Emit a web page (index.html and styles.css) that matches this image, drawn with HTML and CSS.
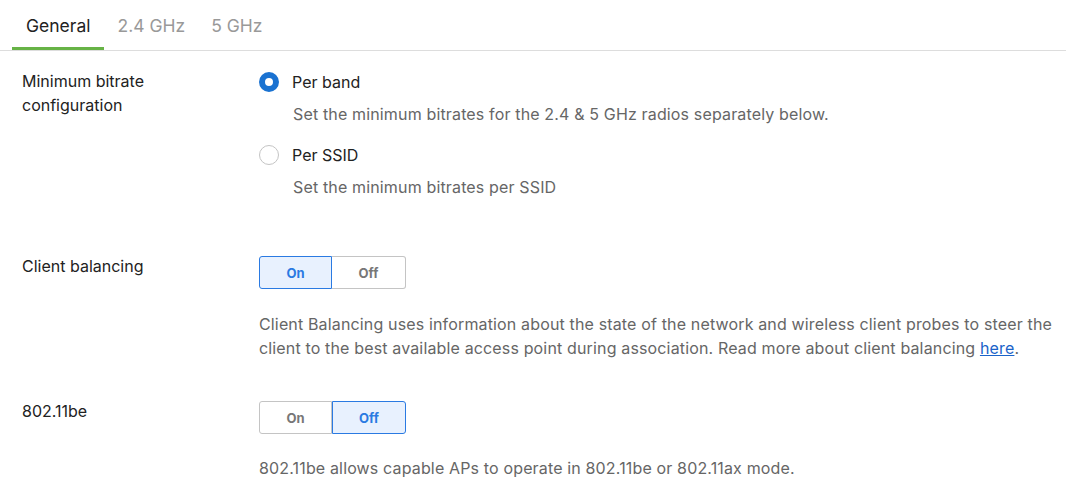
FILE: index.html
```html
<!DOCTYPE html>
<html lang="en">
<head>
    <meta charset="UTF-8">
    <title>Radio settings</title>
    <link rel="stylesheet" href="styles.css">
</head>
<body>
    <div class="tabs">
        <div class="tab active">General</div>
        <div class="tab">2.4 GHz</div>
        <div class="tab">5 GHz</div>
    </div>

    <div class="settings">
        <div class="row bitrate">
            <div class="label">Minimum bitrate<br>configuration</div>
            <div class="control">
                <label class="radio">
                    <span class="dot checked"></span>
                    <span>Per band</span>
                </label>
                <p class="hint indent">Set the minimum bitrates for the 2.4 &amp; 5 GHz radios separately below.</p>
                <label class="radio">
                    <span class="dot"></span>
                    <span>Per SSID</span>
                </label>
                <p class="hint indent">Set the minimum bitrates per SSID</p>
            </div>
        </div>

        <div class="row balancing">
            <div class="label">Client balancing</div>
            <div class="control">
                <div class="toggle">
                    <button class="on selected">On</button>
                    <button class="off">Off</button>
                </div>
                <p class="hint">Client Balancing uses information about the state of the network and wireless client probes to steer the client to the best available access point during association. Read more about client balancing <a href="#">here</a>.</p>
            </div>
        </div>

        <div class="row be">
            <div class="label">802.11be</div>
            <div class="control">
                <div class="toggle">
                    <button class="on">On</button>
                    <button class="off selected">Off</button>
                </div>
                <p class="hint">802.11be allows capable APs to operate in 802.11be or 802.11ax mode.</p>
            </div>
        </div>
    </div>
</body>
</html>
```

FILE: styles.css
```css
body {
    margin: 0;
    font-family: Inter, "Noto Sans", sans-serif;
    color: #222;
    background: #fff;
}
.tabs {
    display: flex;
    padding-left: 12px;
    border-bottom: 1px solid #ddd;
    height: 51px;
    box-sizing: border-box;
}
.tab {
    font-size: 17.5px;
    color: #999;
    padding: 15px 13px 0;
}
.tab.active {
    color: #222;
    padding: 15px 14px 0;
    border-bottom: 3px solid #67b346;
}
.settings {
    padding: 0 12px 0 22px;
}
.row {
    display: flex;
}
.label {
    width: 237px;
    flex-shrink: 0;
    font-size: 16px;
    line-height: 24px;
}
.control {
    flex: 1;
}
.bitrate .label {
    padding-top: 18px;
}
.bitrate .control {
    padding-top: 20px;
}
.radio {
    display: flex;
    align-items: center;
    gap: 13px;
    font-size: 16px;
    height: 22px;
}
.dot {
    width: 20px;
    height: 20px;
    border-radius: 50%;
    border: 1px solid #c4c4c4;
    box-sizing: border-box;
    background: #fff;
}
.dot.checked {
    border: 6px solid #1a72d1;
}
.hint {
    font-size: 16px;
    letter-spacing: 0.15px;
    color: #666;
    line-height: 24px;
    margin: 0;
}
.indent {
    padding-left: 34px;
    margin: 9px 0 18px;
}
.balancing .label {
    padding-top: 37px;
}
.balancing .control {
    padding-top: 39px;
}
.be .label {
    padding-top: 39px;
}
.be .control {
    padding-top: 41px;
}
.toggle {
    display: flex;
    margin-bottom: 23px;
}
.be .toggle {
    margin-bottom: 22px;
}
.toggle button {
    font-family: Inter, sans-serif;
    font-size: 13px;
    font-weight: 700;
    height: 33px;
    width: 73px;
    background: #fff;
    color: #777;
    border: 1px solid #c4c4c4;
    cursor: pointer;
}
.toggle .on {
    border-radius: 3px 0 0 3px;
}
.toggle .off {
    width: 74px;
    border-left: none;
    border-radius: 0 3px 3px 0;
}
.toggle .selected {
    background: #e8f1fe;
    color: #2a7ae2;
    border: 1px solid #2a7ae2;
}
.hint a {
    color: #1a63c9;
}
```
